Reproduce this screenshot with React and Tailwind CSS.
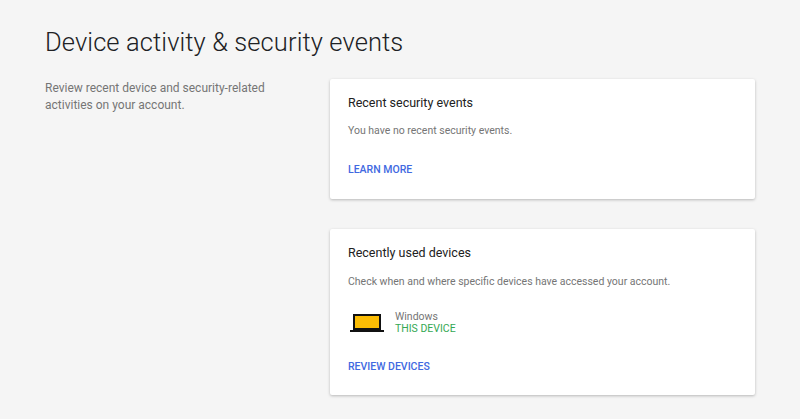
export default function App() {
  return (
    <div className="min-h-[419px] w-[800px] bg-[#f5f5f5] text-[#212121]" style={{ fontFamily: 'Roboto, "Liberation Sans", sans-serif' }}>
      <div className="px-[45px] pt-[26px]">
        <h1 className="text-[25.5px] leading-[32px] font-light tracking-[0.1px] text-[#202124]">Device activity &amp; security events</h1>
        <div className="mt-[21px] flex">
          <div className="w-[289px]">
            <p className="w-[250px] text-[12px] leading-[17px] text-[#757575] pt-[1px]">
              Review recent device and security-related activities on your account.
            </p>
          </div>
          <div className="flex w-[431px] flex-col gap-[30px]">
            <div className="h-[120px] rounded-[2px] bg-white px-[18px] pt-[16px] shadow-[0_1px_3px_rgba(0,0,0,0.25)]">
              <h2 className="text-[12.5px] leading-[16px] text-[#212121]">Recent security events</h2>
              <p className="mt-[13px] text-[10.5px] leading-[14px] text-[#757575]">You have no recent security events.</p>
              <div className="mt-[25px] text-[10.5px] font-medium leading-[14px] text-[#4169e1]">LEARN MORE</div>
            </div>
            <div className="h-[166px] rounded-[2px] bg-white px-[18px] pt-[16px] shadow-[0_1px_3px_rgba(0,0,0,0.25)]">
              <h2 className="text-[12.5px] leading-[16px] text-[#212121]">Recently used devices</h2>
              <p className="mt-[14px] text-[10.5px] leading-[14px] text-[#757575]">Check when and where specific devices have accessed your account.</p>
              <div className="mt-[22px] flex items-center gap-[11px]">
                <svg width="34" height="20" viewBox="0 0 34 20" className="ml-[2px]">
                  <rect x="3" y="1" width="28" height="16" fill="#111" />
                  <rect x="5" y="3" width="24" height="12" fill="#fbbc04" />
                  <rect x="0" y="17" width="34" height="2" fill="#111" />
                </svg>
                <div>
                  <div className="text-[10.5px] leading-[12px] text-[#757575]">Windows</div>
                  <div className="text-[10.5px] leading-[12px] text-[#34a853]">THIS DEVICE</div>
                </div>
              </div>
              <div className="mt-[25px] text-[10.5px] font-medium leading-[14px] text-[#4169e1]">REVIEW DEVICES</div>
            </div>
          </div>
        </div>
      </div>
    </div>
  );
}
